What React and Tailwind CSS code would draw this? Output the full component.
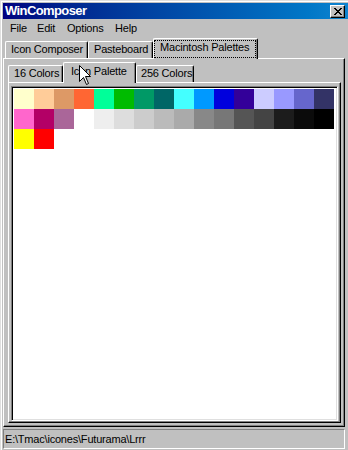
const SW = [
  "bg-[#FFFFCC]", "bg-[#FFCC99]", "bg-[#DD9966]", "bg-[#FF6633]", "bg-[#00FF99]", "bg-[#00BB00]", "bg-[#009966]", "bg-[#006666]",
  "bg-[#44FFFF]", "bg-[#0099FF]", "bg-[#0000DD]", "bg-[#330099]", "bg-[#CCCCFF]", "bg-[#9999FF]", "bg-[#6666CC]", "bg-[#333366]",
  "bg-[#FF66CC]", "bg-[#B30066]", "bg-[#AA6699]", "bg-[#FFFFFF]", "bg-[#EEEEEE]", "bg-[#DDDDDD]", "bg-[#CCCCCC]", "bg-[#BBBBBB]",
  "bg-[#AAAAAA]", "bg-[#888888]", "bg-[#777777]", "bg-[#555555]", "bg-[#444444]", "bg-[#1C1C1C]", "bg-[#0B0B0B]", "bg-[#000000]",
  "bg-[#FFFF00]", "bg-[#FF0000]",
];

function Tab({ w, pl, children }) {
  return (
    <div
      className={`${w} ${pl} h-[17px] bg-[#c0c0c0] border-t border-l border-white border-r border-r-black rounded-tl-[2px] rounded-tr-[2px] shadow-[inset_-1px_0_0_#808080] pt-[1px] leading-[13px] whitespace-nowrap overflow-hidden`}
    >
      {children}
    </div>
  );
}

export default function App() {
  return (
    <div className="relative w-[348px] h-[450px] overflow-hidden bg-[#c0c0c0] text-black text-[11px] tracking-[-0.2px] font-['Liberation_Sans',Arial,sans-serif]">
      <div className="h-full border-t border-l border-[#dfdfdf]">
        <div className="h-full border-t border-l border-white pt-[1px] pl-[1px]">
          {/* Title bar */}
          <div className="h-[16px] flex items-center justify-between pl-[2px] pr-[3px] bg-linear-to-r from-[#000080] to-[#1084d0]">
            <span className="text-white font-bold text-[13px] tracking-[-0.6px] leading-[16px]">WinComposer</span>
            <div className="w-[15px] h-[13px] bg-[#c0c0c0] border-t border-l border-white border-r border-b border-r-black border-b-black shadow-[inset_-1px_-1px_0_#808080] flex items-center justify-center">
              <svg width="8" height="7" viewBox="0 0 8 7" shapeRendering="crispEdges">
                <path
                  fill="#000"
                  d="M0 0h2v1H0zM6 0h2v1H6zM1 1h2v1H1zM5 1h2v1H5zM2 2h4v1H2zM3 3h2v1H3zM2 4h4v1H2zM1 5h2v1H1zM5 5h2v1H5zM0 6h2v1H0zM6 6h2v1H6z"
                />
              </svg>
            </div>
          </div>

          {/* Menu bar */}
          <div className="h-[19px] flex items-center pl-[7px] leading-[13px]">
            <span className="w-[27px]">File</span>
            <span className="w-[30px]">Edit</span>
            <span className="w-[48px]">Options</span>
            <span>Help</span>
          </div>

          {/* Outer tabs */}
          <div className="h-[20px] flex items-end pl-[2px]">
            <Tab w="w-[83px]" pl="pl-[5px]">Icon Composer</Tab>
            <Tab w="w-[65px]" pl="pl-[5px]">Pasteboard</Tab>
            <div className="relative z-10 w-[105px] h-[21px] -mb-[1px] bg-[#c0c0c0] border-t border-l border-white border-r border-r-black rounded-tl-[2px] rounded-tr-[2px] shadow-[inset_-1px_0_0_#808080] pt-[1px] pr-[1px]">
              <div className="h-[18px] border border-dotted border-black pl-[5px] leading-[13px] whitespace-nowrap">
                Macintosh Palettes
              </div>
            </div>
          </div>

          {/* Outer panel */}
          <div className="w-[342px] h-[369px] border-t border-l border-white border-r border-b border-r-black border-b-black shadow-[inset_-1px_-1px_0_#808080] pl-[4px] pt-[3px]">
            {/* Inner tabs */}
            <div className="h-[20px] flex items-end">
              <Tab w="w-[55px]" pl="pl-[5px]">16 Colors</Tab>
              <div className="relative z-10 w-[73px] h-[21px] -mb-[1px] bg-[#c0c0c0] border-t border-l border-white border-r border-r-black rounded-tl-[2px] rounded-tr-[2px] shadow-[inset_-1px_0_0_#808080] pt-[2px] pl-[7px] leading-[13px] whitespace-nowrap">
                Icon Palette
              </div>
              <Tab w="w-[58px]" pl="pl-[4px]">256 Colors</Tab>
            </div>

            {/* Inner panel */}
            <div className="w-[333px] h-[341px] border-t border-l border-white border-r border-b border-r-black border-b-black shadow-[inset_-1px_-1px_0_#808080] pl-[2px] pt-[3px]">
              <div className="w-[327px] h-[335px] bg-white border-t border-l border-[#808080] border-r border-b border-r-white border-b-white shadow-[inset_1px_1px_0_#000,inset_-1px_-1px_0_#dfdfdf] pl-[2px] pt-[2px]">
                <div className="w-[320px] flex flex-wrap">
                  {SW.map((c, i) => (
                    <div key={i} className={`w-[20px] h-[20px] ${c}`} />
                  ))}
                </div>
              </div>
            </div>
          </div>

          {/* Status bar */}
          <div className="mt-[2px] w-[342px] h-[20px] border-t border-l border-[#808080] border-r border-b border-r-white border-b-white flex items-center pl-[1px] leading-[13px] whitespace-nowrap">
            E:\Tmac\icones\Futurama\Lrrr
          </div>
        </div>
      </div>

      {/* Mouse cursor */}
      <svg className="absolute z-30 left-[79px] top-[65px]" width="13" height="21" viewBox="0 0 13 21">
        <polygon
          points="0.5,0.5 0.5,16.5 4.5,12.5 7.5,19.5 9.5,18.5 6.5,11.5 11.5,11.5"
          fill="#fff"
          stroke="#000"
          strokeWidth="1"
          strokeLinejoin="miter"
        />
      </svg>
    </div>
  );
}
